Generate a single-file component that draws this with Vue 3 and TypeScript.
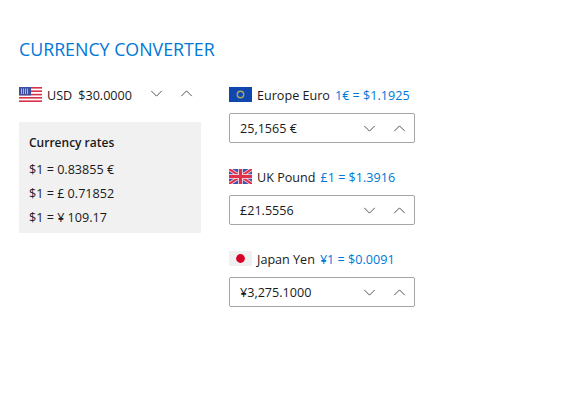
<script setup lang="ts">
interface Target {
  id: string
  name: string
  rate: string
  value: string
}

const targets: Target[] = [
  { id: 'eu', name: 'Europe Euro', rate: '1€ = $1.1925', value: '25,1565 €' },
  { id: 'uk', name: 'UK Pound', rate: '£1 = $1.3916', value: '£21.5556' },
  { id: 'jp', name: 'Japan Yen', rate: '¥1 = $0.0091', value: '¥3,275.1000' },
]

const rates: string[] = ['$1 = 0.83855 €', '$1 = £ 0.71852', '$1 = ¥ 109.17']
</script>

<template>
  <div class="page">
    <h1 class="title">CURRENCY CONVERTER</h1>
    <div class="columns">
      <section class="left">
        <div class="source">
          <svg class="flag" viewBox="0 0 23 15">
            <rect width="23" height="15" fill="#fff" />
            <g fill="#d8324a">
              <rect y="0" width="23" height="1.6" />
              <rect y="3.4" width="23" height="1.6" />
              <rect y="6.8" width="23" height="1.6" />
              <rect y="10" width="23" height="1.6" />
              <rect y="13.4" width="23" height="1.6" />
            </g>
            <rect width="12" height="8.4" fill="#3f4f9f" />
            <g fill="#a9b4e0">
              <rect x="2" y="1.5" width="1" height="5.5" />
              <rect x="4" y="1.5" width="1" height="5.5" />
              <rect x="6" y="1.5" width="1" height="5.5" />
              <rect x="8" y="1.5" width="1" height="5.5" />
            </g>
          </svg>
          <span class="code">USD</span>
          <span class="amount">$30.0000</span>
          <div class="spin">
            <svg class="chev" viewBox="0 0 14 8"><path d="M1 1l6 6 6-6" /></svg>
            <svg class="chev" viewBox="0 0 14 8"><path d="M1 7l6-6 6 6" /></svg>
          </div>
        </div>
        <div class="rates">
          <h2 class="rates-title">Currency rates</h2>
          <p v-for="r in rates" :key="r" class="rate-line">{{ r }}</p>
        </div>
      </section>

      <section class="right">
        <div v-for="t in targets" :key="t.id" class="target">
          <div class="target-head">
            <svg class="flag" viewBox="0 0 23 15">
              <template v-if="t.id === 'eu'">
                <rect width="23" height="15" fill="#0f47af" />
                <circle cx="11.5" cy="7.5" r="3.2" fill="none" stroke="#a8a860" stroke-width="1.4" />
              </template>
              <template v-else-if="t.id === 'uk'">
                <rect width="23" height="15" fill="#3f51b0" />
                <path d="M0 0l23 15M23 0L0 15" stroke="#f7d3d8" stroke-width="3.6" />
                <path d="M0 0l23 15M23 0L0 15" stroke="#e0304a" stroke-width="2" />
                <path d="M11.5 0v15M0 7.5h23" stroke="#fbe6e9" stroke-width="4.6" />
                <path d="M11.5 0v15M0 7.5h23" stroke="#e0304a" stroke-width="3" />
              </template>
              <template v-else>
                <rect width="23" height="15" fill="#f0f0f0" />
                <circle cx="11.5" cy="7.5" r="4.4" fill="#d80027" />
              </template>
            </svg>
            <span class="name">{{ t.name }}</span>
            <span class="rate">{{ t.rate }}</span>
          </div>
          <div class="box">
            <span class="value">{{ t.value }}</span>
            <div class="spin">
              <svg class="chev" viewBox="0 0 14 8"><path d="M1 1l6 6 6-6" /></svg>
              <svg class="chev" viewBox="0 0 14 8"><path d="M1 7l6-6 6 6" /></svg>
            </div>
          </div>
        </div>
      </section>
    </div>
  </div>
</template>

<style scoped>
.page {
  width: 570px;
  height: 410px;
  box-sizing: border-box;
  padding: 37px 19px 0;
  font-family: "Open Sans", "Noto Sans", sans-serif;
  font-size: 12.6px;
  color: #1a1a1a;
  background: #fff;
}

.title {
  margin: 0;
  font-size: 17.8px;
  line-height: 24px;
  font-weight: 400;
  color: #0078d7;
}

.columns {
  display: flex;
  gap: 28px;
  margin-top: 22px;
}

.left {
  width: 182px;
}

.source {
  display: flex;
  align-items: center;
  height: 24px;
  white-space: nowrap;
}

.source .spin {
  margin-bottom: 3px;
}

.flag {
  width: 23px;
  height: 15px;
  flex: none;
  margin-bottom: 2px;
}

.code {
  margin-left: 5px;
}

.amount {
  margin-left: 6px;
}

.spin {
  display: flex;
  gap: 17px;
  margin-left: auto;
  padding-right: 8px;
}

.chev {
  width: 13px;
  height: 7px;
  fill: none;
  stroke: #3c3c3c;
  stroke-width: 1;
}

.rates {
  margin-top: 15px;
  height: 111px;
  box-sizing: border-box;
  padding: 11px 10px 0;
  background: #f1f1f1;
}

.rates-title {
  margin: 0 0 5px;
  font-size: 12px;
  line-height: 20px;
  font-weight: 600;
}

.rate-line {
  margin: 0;
  line-height: 24px;
}

.right {
  width: 186px;
}

.target {
  margin-bottom: 22px;
}

.target-head {
  display: flex;
  align-items: center;
  height: 24px;
  white-space: nowrap;
}

.name {
  margin-left: 5px;
}

.rate {
  margin-left: 5px;
  color: #0078d7;
}

.box {
  display: flex;
  align-items: center;
  height: 30px;
  box-sizing: border-box;
  margin-top: 6px;
  padding-left: 10px;
  border: 1px solid #a6a6a6;
  border-radius: 2px;
}
</style>

<style>
html,
body {
  margin: 0;
  background: #fff;
}
</style>
